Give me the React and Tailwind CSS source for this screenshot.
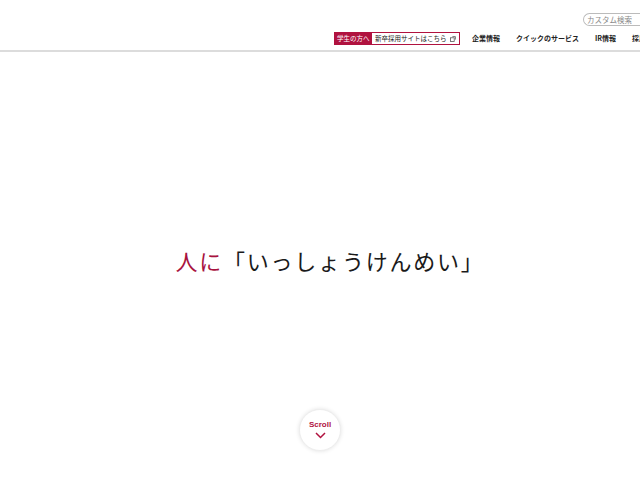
export default function App() {
  const navItems = ['企業情報', 'クイックのサービス', 'IR情報', '採用情報'];

  return (
    <div className="w-[640px] h-[480px] overflow-hidden bg-white flex flex-col" style={{ fontFamily: '"Noto Sans CJK JP", "Noto Sans", sans-serif' }}>
      {/* Header */}
      <header className="h-[52px] shrink-0 border-b-2 border-[#dcdcdc] flex flex-col">
        <div className="pt-[13px] h-[32px] flex w-full">
          <div className="ml-[583px] w-[60px] h-[13px] shrink-0 border border-[#bbb] border-r-0 rounded-l-full flex items-center pl-[3px] text-[7.5px] text-[#888] leading-none whitespace-nowrap overflow-hidden">
            カスタム検索
          </div>
        </div>
        <div className="flex items-center h-[13px] w-full pl-[334px] whitespace-nowrap overflow-hidden">
          <div className="flex h-[13px] shrink-0 items-stretch text-[6.5px] leading-none">
            <span className="bg-[#b0123f] text-white pl-[3px] flex items-center w-[38px]">学生の方へ</span>
            <span className="border border-[#b0123f] border-l-0 text-[#222] pl-[3px] flex items-center w-[88px] gap-[3px]">
              新卒採用サイトはこちら
              <svg width="6" height="6" viewBox="0 0 10 10" fill="none" stroke="#555" strokeWidth="1.3">
                <rect x="1" y="3" width="6" height="6" />
                <path d="M4 1h5v5" />
              </svg>
            </span>
          </div>
          <nav className="flex ml-[12px] gap-[16px] shrink-0 text-[7px] font-bold text-[#222] leading-none">
            {navItems.map((n) => (
              <span key={n}>{n}</span>
            ))}
          </nav>
        </div>
      </header>

      {/* Hero */}
      <main className="flex-1 flex flex-col items-center">
        <div className="h-[197px] shrink-0" />
        <h1 className="text-[22px] font-normal tracking-[0.08em] leading-none text-[#1a1a1a] ml-[20px]">
          <span className="text-[#a8123e]">人に</span>「いっしょうけんめい」
        </h1>
        <div className="h-[138px] shrink-0" />
        <div className="w-[42px] h-[42px] shrink-0 rounded-full bg-white border border-[#eee] shadow-[0_0_4px_rgba(0,0,0,0.12)] flex flex-col items-center justify-center">
          <span className="text-[8px] font-bold text-[#b0123f] leading-none" style={{ fontFamily: '"Liberation Sans", Arial, sans-serif' }}>
            Scroll
          </span>
          <svg width="11" height="7" viewBox="0 0 11 7" fill="none" stroke="#b0123f" strokeWidth="1.5" className="mt-[3px]">
            <path d="M1 1l4.5 4.5L10 1" />
          </svg>
        </div>
      </main>
    </div>
  );
}
